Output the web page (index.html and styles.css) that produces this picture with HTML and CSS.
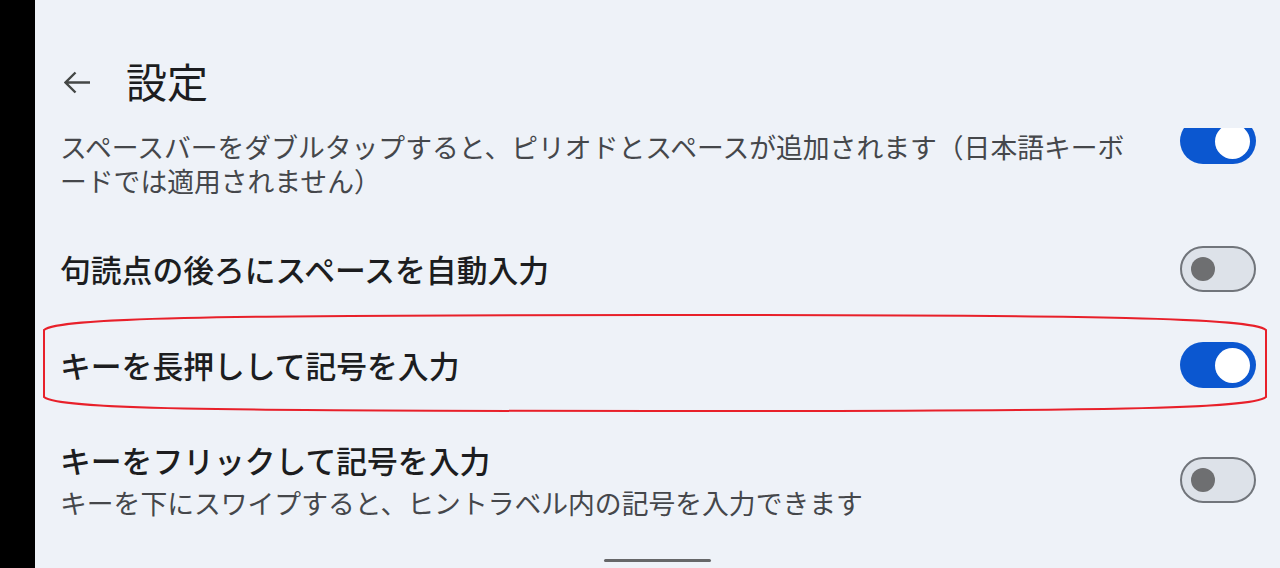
FILE: index.html
```html
<!DOCTYPE html>
<html lang="ja">
<head>
<meta charset="utf-8">
<link rel="stylesheet" href="styles.css">
</head>
<body>
<div class="screen">
  <div class="edge"></div>
  <div class="main">
    <header class="header">
      <svg class="back" width="27" height="23" viewBox="0 0 27 23" aria-hidden="true">
        <path d="M1.5 11.5H26M11.5 1.5L1.5 11.5L11.5 21.5" fill="none" stroke="#444746" stroke-width="2.4" stroke-linecap="butt"/>
      </svg>
      <h1 class="title">設定</h1>
    </header>
    <div class="list">
      <div class="item first">
        <div class="text">
          <div class="scrolled-off"></div>
          <div class="item-desc">スペースバーをダブルタップすると、ピリオドとスペースが追加されます（日本語キーボードでは適用されません）</div>
        </div>
        <div class="switch on"><span class="knob"></span></div>
      </div>
      <div class="item single">
        <div class="text">
          <div class="item-title">句読点の後ろにスペースを自動入力</div>
        </div>
        <div class="switch off"><span class="knob"></span></div>
      </div>
      <div class="item single">
        <div class="text">
          <div class="item-title">キーを長押しして記号を入力</div>
        </div>
        <div class="switch on"><span class="knob"></span></div>
      </div>
      <div class="item">
        <div class="text">
          <div class="item-title">キーをフリックして記号を入力</div>
          <div class="item-desc">キーを下にスワイプすると、ヒントラベル内の記号を入力できます</div>
        </div>
        <div class="switch off"><span class="knob"></span></div>
      </div>
    </div>
    <div class="handle"></div>
  </div>
  <svg class="mark" width="1280" height="568" viewBox="0 0 1280 568" aria-hidden="true">
    <path d="M44 330 C58 318 200 315 655 315 C1110 315 1252 318 1266 330 L1266 397 C1252 409 1110 411 655 411 C200 411 58 409 44 397 Z" fill="none" stroke="#e8202a" stroke-width="2"/>
  </svg>
</div>
</body>
</html>
```
FILE: styles.css
```css
* { box-sizing: border-box; }
html, body {
  margin: 0;
  padding: 0;
  width: 1280px;
  height: 568px;
  overflow: hidden;
  background: #eef2f8;
  font-family: "Noto Sans CJK JP", "Noto Sans", sans-serif;
}
.screen {
  position: relative;
  display: flex;
  width: 1280px;
  height: 568px;
}
.edge {
  width: 35px;
  flex: none;
  background: #000;
}
.main {
  flex: 1;
  display: flex;
  flex-direction: column;
  background: #eef2f8;
  min-width: 0;
}
.header {
  height: 128px;
  flex: none;
  display: flex;
  align-items: center;
  padding: 32px 0 0 29px;
  gap: 35px;
}
.back { display: block; flex: none; margin-top: 5px; }
.title {
  margin: 0;
  font-size: 41px;
  font-weight: 400;
  color: #1c1d20;
  line-height: 48px;
}
.list {
  flex: none;
  height: 431px;
  overflow: hidden;
  padding: 0 24px 0 25px;
}
.item {
  display: flex;
  align-items: center;
  gap: 40px;
  padding: 26px 0 24px;
}
.item.first { margin-top: -70px; }
.item.single { height: 96px; padding: 0 0 2px; }
.text { flex: 1; min-width: 0; }
.scrolled-off { height: 40px; }
.item-title {
  font-size: 30.8px;
  line-height: 40px;
  color: #1c1d20;
  font-weight: 500;
}
.item-desc {
  margin-top: 6px;
  font-size: 26.8px;
  line-height: 34px;
  color: #45474b;
}
.switch {
  flex: none;
  width: 76px;
  height: 46px;
  border-radius: 23px;
  display: flex;
  align-items: center;
}
.switch.on {
  background: #0b57d0;
  justify-content: flex-end;
  padding-right: 6px;
}
.switch.on .knob {
  width: 35px;
  height: 35px;
  border-radius: 50%;
  background: #fff;
}
.switch.off {
  background: #dde2e9;
  border: 2.5px solid #71757b;
  padding-left: 9px;
}
.switch.off .knob {
  width: 24px;
  height: 24px;
  border-radius: 50%;
  background: #6e6f71;
}
.handle {
  width: 107px;
  height: 3px;
  border-radius: 2px;
  background: #666769;
  margin: 0 0 0 569px;
  flex: none;
}
.mark {
  position: absolute;
  left: 0;
  top: 0;
  pointer-events: none;
}
```
